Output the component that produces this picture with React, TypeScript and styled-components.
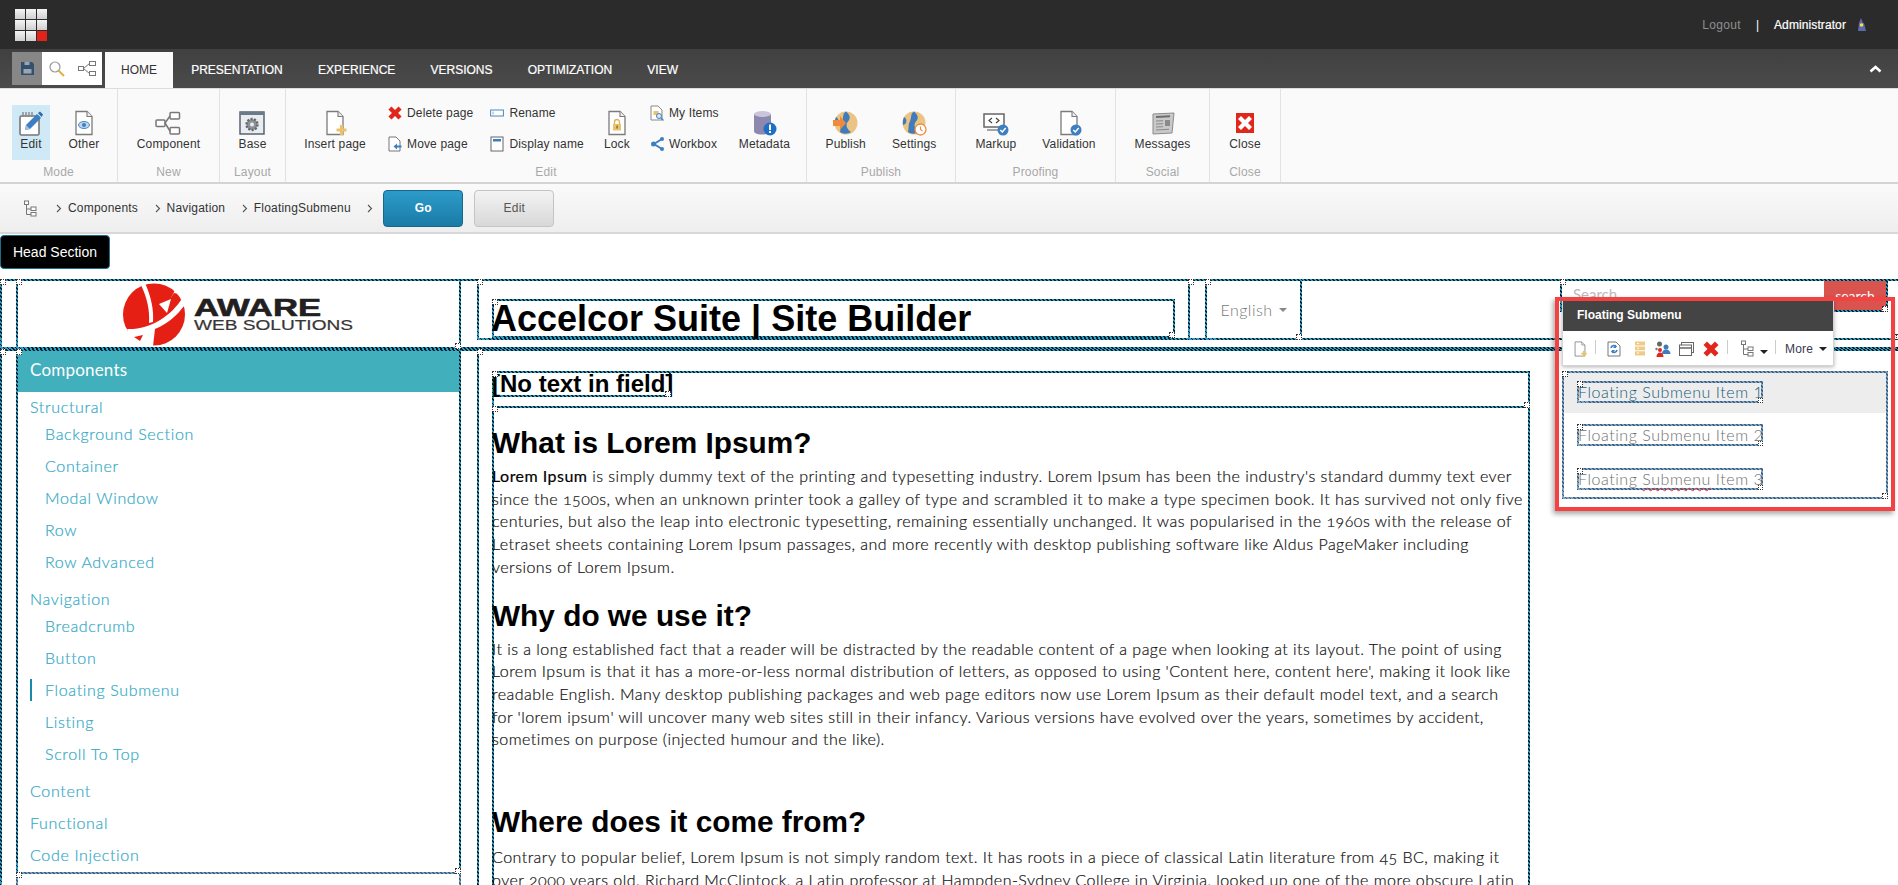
import React from "react";
import styled, { createGlobalStyle, css } from "styled-components";

const Global = createGlobalStyle`
  html, body { margin: 0; padding: 0; height: 885px; overflow: hidden; background: #fff; }
  body { font-family: "Liberation Sans", Arial, sans-serif; }
  * { box-sizing: border-box; }
`;

const dotted = css`
  border: 2px solid #13404f;
  border-image: repeating-linear-gradient(45deg, #0c1f27 0 1.41px, #2b9fc7 1.41px 2.83px) 2;
`;

const Frame = styled.div<{ $soft?: boolean }>`
  position: relative;
  ${dotted}
  ${(p) => p.$soft && css`
    border-image: repeating-linear-gradient(45deg, #3d5f80 0 1.41px, #7ea6c4 1.41px 2.83px) 2;
  `}
  &::before, &::after {
    content: "";
    position: absolute;
    width: 4px;
    height: 4px;
    background: #fff;
    border: 1px dotted #333;
    z-index: 2;
  }
  &::before { left: -2px; top: -2px; }
  &::after { right: -2px; bottom: -2px; }
`;

const Page = styled.div`
  position: relative;
  width: 1898px;
  height: 885px;
  overflow: hidden;
`;

const TopBar = styled.header`
  height: 49px;
  background: #2b2b2b;
  display: flex;
  align-items: center;
  padding: 0 0 0 15px;
  font-size: 12px;
`;

const AppGrid = styled.div`
  display: grid;
  grid-template-columns: repeat(3, 10px);
  grid-auto-rows: 10px;
  gap: 1px;
`;

const AppCell = styled.span<{ $red?: boolean }>`
  background: ${(p) => (p.$red ? "#e2231a" : "linear-gradient(#f4f4f4, #cfcfcf)")};
`;

const UserArea = styled.div`
  margin-left: auto;
  display: flex;
  align-items: center;
  padding-right: 32px;
`;

const Logout = styled.span`
  color: #8f8f8f;
  letter-spacing: 0.3px;
`;

const Pipe = styled.span`
  color: #fff;
  margin: 0 15px;
`;

const UserName = styled.span`
  color: #fff;
  letter-spacing: 0.1px;
  margin-right: 11px;
  -webkit-text-stroke: 0.2px #fff;
`;

const TabBar = styled.nav`
  height: 39px;
  background: linear-gradient(#404040, #4b4b4b);
  display: flex;
  align-items: flex-end;
  padding-left: 12px;
  position: relative;
`;

const Quick = styled.div`
  display: flex;
  height: 33px;
  margin-bottom: 3px;
  margin-right: 3px;
  background: #fff;
`;

const QuickBtn = styled.div<{ $active?: boolean }>`
  width: 30px;
  display: flex;
  align-items: center;
  justify-content: center;
  background: ${(p) => (p.$active ? "#878787" : "#fff")};
`;

const Tab = styled.div<{ $active?: boolean }>`
  height: 36px;
  padding: ${(p) => (p.$active ? "0 16px" : "0 18px 0 17.2px")};
  margin-right: ${(p) => (p.$active ? "1px" : "0")};
  display: flex;
  align-items: center;
  font-size: 12px;
  color: ${(p) => (p.$active ? "#333" : "#fff")};
  background: ${(p) => (p.$active ? "#fafafa" : "transparent")};
  -webkit-text-stroke: ${(p) => (p.$active ? "0" : "0.2px #fff")};
`;

const Collapse = styled.div`
  position: absolute;
  right: 16px;
  top: 16px;
  display: flex;
`;

const Ribbon = styled.section`
  height: 96px;
  background: #fafafa;
  border-top: 1px solid #ddd;
  border-bottom: 2px solid #d4d4d4;
  display: flex;
`;

const Group = styled.div<{ $w: number }>`
  width: ${(p) => p.$w}px;
  border-right: 1px solid #e2e2e2;
  display: flex;
  flex-direction: column;
  letter-spacing: 0.15px;
`;

const GroupBody = styled.div<{ $pad?: number; $gap?: number; $center?: boolean }>`
  flex: 1;
  display: flex;
  padding-left: ${(p) => p.$pad ?? 0}px;
  gap: ${(p) => p.$gap ?? 0}px;
  justify-content: ${(p) => (p.$center ? "center" : "flex-start")};
  padding-top: 16px;
`;

const GroupLabel = styled.div`
  height: 25px;
  line-height: 24px;
  text-align: center;
  color: #a8a8a8;
  font-size: 12px;
`;

const BigBtn = styled.div<{ $w?: number; $active?: boolean; $ml?: number }>`
  width: ${(p) => (p.$w ? `${p.$w}px` : "auto")};
  height: 55px;
  margin-left: ${(p) => p.$ml ?? 0}px;
  display: flex;
  flex-direction: column;
  align-items: center;
  font-size: 12px;
  color: #333;
  white-space: nowrap;
  background: ${(p) => (p.$active ? "#cfe9f6" : "transparent")};
  svg { height: 26px; width: 26px; margin: 5px 0 0; display: block; }
  span { margin-top: 1px; line-height: 15px; }
`;

const SmallCol = styled.div<{ $ml?: number }>`
  display: flex;
  flex-direction: column;
  margin-left: ${(p) => p.$ml ?? 0}px;
  gap: 15px;
`;

const SmallBtn = styled.div`
  display: flex;
  align-items: center;
  height: 16px;
  font-size: 12px;
  color: #333;
  white-space: nowrap;
  svg { width: 14px; height: 16px; margin-right: 5px; flex: none; }
`;

const Crumbs = styled.div`
  height: 50px;
  background: linear-gradient(#fafafa, #eeeeee);
  border-bottom: 2px solid #d8d8d8;
  display: flex;
  align-items: center;
  padding-left: 23px;
  font-size: 12px;
  letter-spacing: 0.2px;
  color: #333;
`;

const CrumbItem = styled.span`
  margin: 0 16.5px 0 6px;
  white-space: nowrap;
`;

const CrumbRoot = styled.span`
  display: flex;
  margin-right: 19px;
`;

const Go = styled.div`
  width: 80px;
  height: 37px;
  border-radius: 4px;
  border: 1px solid #15678c;
  background: linear-gradient(#2c9bca, #1b7ba6);
  color: #fff;
  font-weight: bold;
  display: flex;
  align-items: center;
  justify-content: center;
  margin-left: 10px;
`;

const EditBtn = styled(Go)`
  border-color: #c4c4c4;
  background: linear-gradient(#f3f3f3, #d8d8d8);
  color: #555;
  font-weight: normal;
  margin-left: 11px;
`;

const HeadSection = styled.div`
  width: 110px;
  height: 34px;
  margin: 1px 0 10px 0;
  background: #000;
  border: 1px solid #1a6e8c;
  border-radius: 4px;
  color: #fff;
  font-size: 14px;
  display: flex;
  align-items: center;
  justify-content: center;
`;

const HeaderRow = styled(Frame)`
  margin: 0 -6px 0 0;
  height: 70px;
  display: grid;
  grid-template-columns: 445px 1fr;
  column-gap: 16px;
  padding-left: 14px;
`;

const LogoCell = styled(Frame)`
  margin: -2px 0 -2px;
  display: flex;
  align-items: center;
  justify-content: center;
`;

const HeaderMain = styled(Frame)`
  margin-top: -2px;
  height: 61px;
  padding-left: 13px;
  display: flex;
`;

const TitleBox = styled(Frame)`
  width: 683px;
  height: 39px;
  margin-top: 18px;
  flex: none;
  display: flex;
  align-items: center;
`;

const Title = styled.h1`
  margin: 0 0 0 -3px;
  font-size: 36px;
  line-height: 38px;
  font-weight: bold;
  color: #000;
  white-space: nowrap;
`;

const LangOuter = styled(Frame)`
  margin: -2px 0 -2px 13px;
  flex: 1;
  padding-left: 15px;
  display: flex;
`;

const LangBox = styled(Frame)`
  width: 97px;
  margin: -2px 0;
  display: flex;
  align-items: center;
  justify-content: center;
  font-family: Lato, sans-serif;
  font-weight: 300;
  font-size: 16px;
  letter-spacing: 0.5px;
  color: #777;
  gap: 6px;
`;

const Caret = styled.i<{ $c?: string; $low?: boolean }>`
  width: 0;
  height: 0;
  border-left: 4px solid transparent;
  border-right: 4px solid transparent;
  border-top: 4px solid ${(p) => p.$c ?? "#888"};
  display: inline-block;
  margin-top: ${(p) => (p.$low ? "7px" : "0")};
`;

const SearchBox = styled(Frame)`
  width: 328px;
  height: 33px;
  margin: -2px 0 0 258px;
  display: flex;
  justify-content: space-between;
`;

const SearchHint = styled.span`
  font-family: Lato, sans-serif;
  font-size: 15px;
  color: #bbb;
  padding: 4px 0 0 11px;
`;

const SearchBtn = styled.div`
  width: 62px;
  background: #d9534f;
  color: #fff;
  font-family: Lato, sans-serif;
  font-size: 14px;
  display: flex;
  align-items: center;
  justify-content: center;
`;

const MainRow = styled(Frame)`
  margin: 0 -6px 0 0;
  height: 540px;
  display: grid;
  grid-template-columns: 445px 1fr;
  column-gap: 16px;
  padding-left: 14px;
`;

const SideCol = styled.div`
  display: flex;
  flex-direction: column;
  margin-top: -2px;
`;

const Sidebar = styled(Frame)`
  height: 525px;
  font-family: Lato, sans-serif;
  font-weight: 300;
  color: #33a9c6;
  -webkit-text-stroke: 0.2px #33a9c6;
  font-size: 16px;
  letter-spacing: 0.66px;
`;

const SideBelow = styled(Frame)`
  flex: 1;
  margin-top: -2px;
`;

const SideHead = styled.div`
  height: 41px;
  background: #41afbc;
  color: #fff;
  -webkit-text-stroke: 0;
  font-size: 17px;
  font-weight: 400;
  line-height: 38px;
  padding-left: 12px;
  letter-spacing: 0.2px;
`;

const SideSection = styled.div<{ $mt?: number; $tight?: boolean }>`
  margin-top: ${(p) => p.$mt ?? 0}px;
  padding-left: 12px;
  height: ${(p) => (p.$tight ? 22 : 32)}px;
  line-height: ${(p) => (p.$tight ? 22 : 32)}px;
`;

const SideItem = styled.div<{ $active?: boolean }>`
  position: relative;
  height: 32px;
  line-height: 32px;
  padding-left: 27px;
  ${(p) => p.$active && css`
    &::before {
      content: "";
      position: absolute;
      left: 12px;
      top: 5px;
      bottom: 5px;
      width: 2px;
      background: #1a8aaa;
    }
  `}
`;

const MainCol = styled(Frame)`
  margin-top: -2px;
  height: 560px;
  padding: 20px 0 0 13px;
  display: flex;
  align-items: flex-start;
`;

const ContentCol = styled.div`
  width: 1038px;
  flex: none;
`;

const FieldBox = styled(Frame)`
  height: 37px;
`;

const NoText = styled(Frame)`
  width: 179px;
  height: 26px;
  margin: -2px 0 0 -2px;
  font-size: 24px;
  line-height: 24px;
  font-weight: bold;
  color: #000;
  white-space: nowrap;
  display: flex;
  align-items: center;
  span { margin-left: -2px; }
`;

const Body = styled(Frame)`
  height: 500px;
  margin-top: -2px;
  padding-top: 18px;
`;

const H2 = styled.h2<{ $mt?: number; $mb?: number }>`
  margin: ${(p) => p.$mt ?? 0}px 0 ${(p) => p.$mb ?? 6}px -2px;
  font-size: 29.8px;
  line-height: 33px;
  font-weight: bold;
  color: #000;
`;

const Para = styled.p`
  margin: 0 0 0 -2px;
  font-family: Lato, sans-serif;
  font-weight: 300;
  font-size: 16px;
  line-height: 22.7px;
  letter-spacing: 0.47px;
  color: #111;
  -webkit-text-stroke: 0.2px #111;
  white-space: nowrap;
  font-variant-numeric: oldstyle-nums;
  strong { font-weight: 400; color: #000; }
`;

const SubMenu = styled(Frame)`
  width: 326px;
  height: 128px;
  margin-left: 32px;
  flex: none;
  font-family: Lato, sans-serif;
  font-weight: 300;
  font-size: 16px;
  letter-spacing: 0.55px;
`;

const SubItem = styled.div<{ $active?: boolean }>`
  height: ${(p) => (p.$active ? 40 : 44)}px;
  background: ${(p) => (p.$active ? "#ededed" : "transparent")};
  color: ${(p) => (p.$active ? "#17597a" : "#6f6f6f")};
  display: flex;
  align-items: ${(p) => (p.$active ? "flex-start" : "center")};
  padding: ${(p) => (p.$active ? "8px 0 0 13px" : "0 0 0 13px")};
`;

const SubText = styled(Frame)`
  height: 22px;
  line-height: 18px;
  white-space: nowrap;
  width: 186px;
  text-indent: -1px;
  &::after { width: 3px; height: 3px; right: -2px; bottom: -2px; }
  u { text-decoration: underline wavy #e33 1px; text-underline-offset: 2px; }
`;

const Highlight = styled.div`
  position: absolute;
  left: 1555px;
  top: 297px;
  width: 340px;
  height: 214px;
  border: 4px solid #f44242;
  box-shadow: -2px 3px 5px rgba(0, 0, 0, 0.35);
  z-index: 6;
`;

const Floating = styled.div`
  position: absolute;
  left: 1562px;
  top: 299px;
  width: 272px;
  height: 67px;
  background: #fff;
  border: 1px solid #d5d5d5;
  box-shadow: 0 1px 4px rgba(0, 0, 0, 0.3);
  z-index: 5;
`;

const FloatTitle = styled.div`
  height: 31px;
  background: #444;
  color: #fff;
  font-size: 12px;
  font-weight: bold;
  line-height: 31px;
  padding-left: 14px;
`;

const FloatTools = styled.div`
  height: 34px;
  display: flex;
  align-items: center;
  padding: 1px 0 0 9px;
  font-size: 12px;
  letter-spacing: 0.2px;
  color: #3a3a55;
  svg { flex: none; }
`;

const ToolGap = styled.span<{ $w: number }>`
  width: ${(p) => p.$w}px;
  flex: none;
`;

const FloatSep = styled.span<{ $l: number; $r: number }>`
  width: 1px;
  height: 14px;
  background: #ccc;
  margin: -4px ${(p) => p.$r}px 0 ${(p) => p.$l}px;
`;

const Ico = styled.svg`
  display: block;
`;

/* ---------- icons ---------- */
const Doc = ({ s = "#7b7b7b" }: { s?: string }) => (
  <>
    <path d="M5 1.5h11l5 5v18H5z" fill="#fff" stroke={s} strokeWidth="1.3" />
    <path d="M16 1.5v5h5" fill="#eee" stroke={s} strokeWidth="1.1" />
  </>
);
const Check = () => (
  <>
    <circle cx="20" cy="20" r="5.5" fill="#3d7fc1" />
    <path d="M17.3 20l2 2 3.4-4" fill="none" stroke="#fff" strokeWidth="1.5" />
  </>
);
const EditIcon = () => (
  <svg viewBox="0 0 26 26">
    <rect x="2" y="6" width="19" height="19" rx="1.5" fill="#fff" stroke="#777" strokeWidth="1.6" />
    <path d="M5 2v5M8 2v5M11 2v5M14 2v5" stroke="#888" strokeWidth="1.4" />
    <path d="M7 20l1-5L19 4l4 4-11 11z" fill="#3d7fc1" />
    <path d="M20 3l2-1.5 3 3L23.5 7z" fill="#2f6aa6" />
    <path d="M7 20l1-5 4 4z" fill="#9fc3e6" />
  </svg>
);
const OtherIcon = () => (
  <svg viewBox="0 0 26 26">
    <Doc />
    <ellipse cx="13" cy="15" rx="5.5" ry="3.5" fill="#bcd6ee" stroke="#4d87bd" />
    <circle cx="13" cy="15" r="2" fill="#3d7fc1" />
  </svg>
);
const ComponentIcon = () => (
  <svg viewBox="0 0 26 26" fill="#fff" stroke="#777" strokeWidth="1.5">
    <rect x="1" y="10" width="9" height="6.5" rx="1" />
    <rect x="15" y="2.5" width="9.5" height="6.5" rx="1" />
    <rect x="15" y="17.5" width="9.5" height="6.5" rx="1" />
    <path d="M10 13l5-7M10 13l5 8" fill="none" />
  </svg>
);
const BaseIcon = () => (
  <svg viewBox="0 0 26 26">
    <rect x="1" y="2" width="24" height="22" fill="#e9edf1" stroke="#4d5a66" strokeWidth="1.4" />
    <rect x="1" y="2" width="24" height="3" fill="#6b7a88" />
    <circle cx="13" cy="14.5" r="5.5" fill="#8d9296" stroke="#666" strokeWidth="2.4" strokeDasharray="2 1.4" />
    <circle cx="13" cy="14.5" r="2" fill="#e9edf1" />
  </svg>
);
const InsertIcon = () => (
  <svg viewBox="0 0 26 26">
    <Doc />
    <path d="M19.5 15v10M14.5 20h10" stroke="#eac26c" strokeWidth="3.2" />
  </svg>
);
const LockIcon = () => (
  <svg viewBox="0 0 26 26">
    <Doc />
    <path d="M10.5 14v-2a2.5 2.5 0 0 1 5 0v2" fill="none" stroke="#d9b25c" strokeWidth="1.3" />
    <rect x="9" y="14" width="8" height="6.5" fill="#eac26c" />
    <rect x="12.4" y="15.5" width="1.4" height="3" fill="#8a6d2b" />
  </svg>
);
const RedX = () => (
  <Ico width="16" height="16" viewBox="0 0 16 16">
    <path d="M0.5 4L4 0.5l4 4 4-4L15.5 4l-4 4 4 4-3.5 3.5-4-4-4 4L0.5 12l4-4z" fill="#e1261c" />
  </Ico>
);
const RenameIcon = () => (
  <svg viewBox="0 0 14 16">
    <rect x="0.6" y="5" width="12.8" height="6" fill="#fff" stroke="#4d87bd" />
    <rect x="2" y="6.5" width="2" height="3" fill="#bcd6ee" />
  </svg>
);
const MoveIcon = () => (
  <svg viewBox="0 0 14 16">
    <path d="M1 1h7l4 4v10H1z" fill="#fff" stroke="#777" />
    <path d="M13.5 9.5H9V7.5L5.5 10.5 9 13.5v-2h4.5z" fill="#3d7fc1" />
  </svg>
);
const DisplayIcon = () => (
  <svg viewBox="0 0 14 16">
    <rect x="1" y="1" width="12" height="14" fill="#fff" stroke="#666" />
    <rect x="3" y="3" width="8" height="2.5" fill="#3d7fc1" />
  </svg>
);
const MyItemsIcon = () => (
  <svg viewBox="0 0 14 16">
    <path d="M1 1h7l4 4v10H1z" fill="#fff" stroke="#888" />
    <rect x="3.5" y="6" width="5" height="4" fill="#eac26c" />
    <circle cx="9" cy="11" r="2.5" fill="#dbe9f6" stroke="#3d7fc1" />
    <path d="M11 13l2.5 2.5" stroke="#3d7fc1" strokeWidth="1.3" />
  </svg>
);
const WorkboxIcon = () => (
  <svg viewBox="0 0 14 16">
    <path d="M12 3L4 8l8 5" fill="none" stroke="#3d7fc1" strokeWidth="2" />
    <circle cx="3.5" cy="8" r="2.5" fill="#3d7fc1" />
    <circle cx="12" cy="3" r="2" fill="#3d7fc1" />
    <circle cx="12" cy="13" r="2" fill="#3d7fc1" />
  </svg>
);
const MetadataIcon = () => (
  <svg viewBox="0 0 26 26">
    <path d="M3 4v17c0 2 3 3.5 8 3.5s9-1.5 9-3.5V4z" fill="#8d88ad" />
    <ellipse cx="11.5" cy="4" rx="8.5" ry="3" fill="#c9c6dc" />
    <circle cx="19" cy="19" r="6.5" fill="#1f6fc4" />
    <rect x="18" y="14.5" width="2" height="5.5" fill="#fff" />
    <rect x="18" y="21" width="2" height="2" fill="#fff" />
  </svg>
);
const Globe = () => (
  <>
    <circle cx="13" cy="13" r="11.5" fill="#ecc382" />
    <path d="M13 1.5c4 3 5 7 2 10s-1 8 3 10.5c-3 2-8 2.5-11 0 1-4 0-7 2-11S9 4 13 1.5z" fill="#3f7cbd" />
    <path d="M3 7c2 1 3 3 2 6-1 1-2 2-3 2-.5-3 0-6 1-8z" fill="#3f7cbd" />
  </>
);
const PublishIcon = () => (
  <svg viewBox="0 0 26 26">
    <Globe />
    <path d="M0 10h7V6l6 7-6 7v-4H0z" fill="#ee8a3c" />
  </svg>
);
const SettingsIcon = () => (
  <svg viewBox="0 0 26 26">
    <Globe />
    <circle cx="19.5" cy="19.5" r="5.5" fill="#fff" stroke="#ee8a3c" strokeWidth="1.3" />
    <path d="M19.5 16.5v3l2 1.5" fill="none" stroke="#ee8a3c" strokeWidth="1.1" />
  </svg>
);
const MarkupIcon = () => (
  <svg viewBox="0 0 26 26">
    <rect x="1" y="4" width="20" height="13" fill="#fff" stroke="#666" strokeWidth="1.5" />
    <path d="M4 20h15" stroke="#888" strokeWidth="1.5" />
    <path d="M9 8l-3 2.5 3 2.5M13 8l3 2.5-3 2.5" fill="none" stroke="#444" strokeWidth="1.2" />
    <Check />
  </svg>
);
const ValidationIcon = () => (
  <svg viewBox="0 0 26 26">
    <Doc />
    <Check />
  </svg>
);
const MessagesIcon = () => (
  <svg viewBox="0 0 26 26">
    <path d="M3 4l21-1-2 20-19 1z" fill="#c9c9c9" stroke="#8a8a8a" />
    <path d="M6 7l14-.8" stroke="#6d6d6d" strokeWidth="2" />
    <path d="M6 11l7-.3M6 14l7-.3M6 17l7-.3M6 20l13-.7" stroke="#8a8a8a" />
    <rect x="15" y="10" width="5" height="6" fill="#8a8a8a" />
  </svg>
);
const CloseIcon = () => (
  <svg viewBox="0 0 26 26">
    <rect x="4" y="3" width="18" height="20" fill="#e1261c" />
    <path d="M9 6l4 4 4-4 3 3-4 4 4 4-3 3-4-4-4 4-3-3 4-4-4-4z" fill="#fff" />
  </svg>
);
const TreeIcon = () => (
  <Ico width="14" height="17" viewBox="0 0 14 17" fill="#fff" stroke="#777">
    <rect x="1.5" y="1" width="4" height="3.5" />
    <rect x="8" y="7" width="5" height="3.5" />
    <rect x="8" y="12.5" width="5" height="3.5" />
    <path d="M3.5 4.5V14.5H8M3.5 9H8" fill="none" />
  </Ico>
);
const SaveIcon = () => (
  <Ico width="15" height="15" viewBox="0 0 15 15">
    <path d="M1 1h11l2 2v11H1z" fill="#34506e" />
    <rect x="4.5" y="1" width="5" height="3" fill="#9aa5b0" />
    <rect x="3.5" y="8" width="8" height="4.5" fill="#9aa5b0" />
  </Ico>
);
const SearchIcon = () => (
  <Ico width="18" height="18" viewBox="0 0 18 18">
    <circle cx="7" cy="7" r="5" fill="#fff" stroke="#999" strokeWidth="1.2" />
    <path d="M10.5 10.5L16 16" stroke="#e4ae45" strokeWidth="2" />
  </Ico>
);
const ShareBoxes = () => (
  <Ico width="18" height="16" viewBox="0 0 18 16" fill="#fff" stroke="#777">
    <rect x="0.5" y="5.5" width="5" height="4" />
    <rect x="11.5" y="0.5" width="6" height="4" />
    <rect x="11.5" y="10.5" width="6" height="4" />
    <path d="M5.5 7.5l6-5M5.5 7.5l6 5" fill="none" />
  </Ico>
);
const UserIcon = () => (
  <Ico width="9" height="14" viewBox="0 0 9 14">
    <path d="M4 0l2 5H2z" fill="#6c62a8" />
    <path d="M1 13l1-8h5l2 8z" fill="#5b6aa8" />
    <circle cx="4.5" cy="7" r="1.8" fill="#f2e04a" />
  </Ico>
);
const ChevronUp = () => (
  <Ico width="13" height="8" viewBox="0 0 13 8">
    <path d="M1.5 6.5l5-4.5 5 4.5" fill="none" stroke="#fff" strokeWidth="2.6" />
  </Ico>
);
const FDoc = () => (
  <Ico width="16" height="16" viewBox="0 0 26 26">
    <Doc />
    <path d="M19.5 16v9M15 20.5h9" stroke="#eac26c" strokeWidth="3.2" />
  </Ico>
);
const FRefresh = () => (
  <Ico width="14" height="16" viewBox="0 0 14 16">
    <path d="M1 1h8l4 4v10H1z" fill="#fff" stroke="#777" />
    <path d="M4 7a3 3 0 0 1 5.5-1M10 9a3 3 0 0 1-5.5 1" fill="none" stroke="#3d7fc1" strokeWidth="1.6" />
    <path d="M9 3.5V7H6M5 12.5V9h3" fill="#3d7fc1" />
  </Ico>
);
const FStack = () => (
  <Ico width="12" height="15" viewBox="0 0 12 15">
    <rect x="1" y="0.5" width="10" height="14" fill="#efcb87" />
    <path d="M1 5h10M1 9.8h10" stroke="#fff" strokeWidth="1.1" />
    <path d="M3 2.5h2M3 7.3h2M3 12h2" stroke="#fff" />
  </Ico>
);
const FPeople = () => (
  <Ico width="16" height="16" viewBox="0 0 16 16">
    <circle cx="4.5" cy="3" r="2.5" fill="#666" />
    <circle cx="11" cy="6" r="2.5" fill="#3f7cbd" />
    <path d="M7 13c0-3 1.5-4.5 4-4.5s4.5 1.5 4.5 4.5z" fill="#3f7cbd" />
    <circle cx="5" cy="9" r="2" fill="#e1261c" />
    <path d="M1.5 16c0-3 1.5-4.5 3.5-4.5S8.5 13 8.5 16z" fill="#e1261c" />
    <circle cx="1.5" cy="8" r="1.2" fill="#777" />
  </Ico>
);
const FWindows = () => (
  <Ico width="15" height="14" viewBox="0 0 15 14" fill="#fff" stroke="#666">
    <rect x="2.5" y="0.5" width="12" height="10" />
    <rect x="0.5" y="3" width="12" height="10.5" />
    <path d="M0.5 6h12" strokeWidth="1.5" />
  </Ico>
);
const Logo = () => (
  <svg width="232" height="63" viewBox="0 0 232 63">
    <circle cx="31" cy="31.5" r="31" fill="#e61f14" />
    <path d="M18 2C24 15 27 27 26 40l4-1C31 27 28 13 22 0z" fill="#fff" />
    <path d="M36 21l12-5-4 14z" fill="#fff" />
    <path d="M47 16l4-6 11 2-2-6-6-3-4 8z" fill="#fff" />
    <path d="M4 46c22 1 44-12 56-32l3 6C50 40 28 52 6 50z" fill="#fff" />
    <path d="M2 48l30-2-2 17H-1z" fill="#fff" />
    <path d="M11 54l9-2-3 6z" fill="#e61f14" />
    <text x="71" y="33" fontFamily="Liberation Sans" fontWeight="bold" fontSize="24" fill="#231f20" textLength="127" lengthAdjust="spacingAndGlyphs" stroke="#231f20" strokeWidth="0.6">AWARE</text>
    <text x="71" y="47" fontFamily="Liberation Sans" fontSize="14" fill="#3a3637" textLength="159" lengthAdjust="spacingAndGlyphs" stroke="#3a3637" strokeWidth="0.2">WEB SOLUTIONS</text>
  </svg>
);
const Chevron = () => (
  <Ico width="6" height="9" viewBox="0 0 6 9">
    <path d="M1 1l3.5 3.5L1 8" fill="none" stroke="#555" strokeWidth="1.1" />
  </Ico>
);

export default function App() {
  return (
    <Page>
      <Global />
      <TopBar>
        <AppGrid>
          {Array.from({ length: 9 }).map((_, i) => (
            <AppCell key={i} $red={i === 8} />
          ))}
        </AppGrid>
        <UserArea>
          <Logout>Logout</Logout>
          <Pipe>|</Pipe>
          <UserName>Administrator</UserName>
          <UserIcon />
        </UserArea>
      </TopBar>
      <TabBar>
        <Quick>
          <QuickBtn $active><SaveIcon /></QuickBtn>
          <QuickBtn><SearchIcon /></QuickBtn>
          <QuickBtn><ShareBoxes /></QuickBtn>
        </Quick>
        <Tab $active>HOME</Tab>
        <Tab>PRESENTATION</Tab>
        <Tab>EXPERIENCE</Tab>
        <Tab>VERSIONS</Tab>
        <Tab>OPTIMIZATION</Tab>
        <Tab>VIEW</Tab>
        <Collapse><ChevronUp /></Collapse>
      </TabBar>
      <Ribbon>
        <Group $w={118}>
          <GroupBody $pad={12}>
            <BigBtn $w={38} $active><EditIcon /><span>Edit</span></BigBtn>
            <BigBtn $w={48} $ml={10}><OtherIcon /><span>Other</span></BigBtn>
          </GroupBody>
          <GroupLabel>Mode</GroupLabel>
        </Group>
        <Group $w={102}>
          <GroupBody $center><BigBtn><ComponentIcon /><span>Component</span></BigBtn></GroupBody>
          <GroupLabel>New</GroupLabel>
        </Group>
        <Group $w={66}>
          <GroupBody $center><BigBtn><BaseIcon /><span>Base</span></BigBtn></GroupBody>
          <GroupLabel>Layout</GroupLabel>
        </Group>
        <Group $w={521}>
          <GroupBody $pad={19}>
            <BigBtn $w={60}><InsertIcon /><span>Insert page</span></BigBtn>
            <SmallCol $ml={23}>
              <SmallBtn><RedX />Delete page</SmallBtn>
              <SmallBtn><MoveIcon />Move page</SmallBtn>
            </SmallCol>
            <SmallCol $ml={17}>
              <SmallBtn><RenameIcon />Rename</SmallBtn>
              <SmallBtn><DisplayIcon />Display name</SmallBtn>
            </SmallCol>
            <BigBtn $ml={20}><LockIcon /><span>Lock</span></BigBtn>
            <SmallCol $ml={20}>
              <SmallBtn><MyItemsIcon />My Items</SmallBtn>
              <SmallBtn><WorkboxIcon />Workbox</SmallBtn>
            </SmallCol>
            <BigBtn $ml={20}><MetadataIcon /><span>Metadata</span></BigBtn>
          </GroupBody>
          <GroupLabel>Edit</GroupLabel>
        </Group>
        <Group $w={149}>
          <GroupBody $center $gap={26}>
            <BigBtn><PublishIcon /><span>Publish</span></BigBtn>
            <BigBtn><SettingsIcon /><span>Settings</span></BigBtn>
          </GroupBody>
          <GroupLabel>Publish</GroupLabel>
        </Group>
        <Group $w={160}>
          <GroupBody $center $gap={26}>
            <BigBtn><MarkupIcon /><span>Markup</span></BigBtn>
            <BigBtn><ValidationIcon /><span>Validation</span></BigBtn>
          </GroupBody>
          <GroupLabel>Proofing</GroupLabel>
        </Group>
        <Group $w={94}>
          <GroupBody $center><BigBtn><MessagesIcon /><span>Messages</span></BigBtn></GroupBody>
          <GroupLabel>Social</GroupLabel>
        </Group>
        <Group $w={71}>
          <GroupBody $center><BigBtn><CloseIcon /><span>Close</span></BigBtn></GroupBody>
          <GroupLabel>Close</GroupLabel>
        </Group>
      </Ribbon>
      <Crumbs>
        <CrumbRoot><TreeIcon /></CrumbRoot>
        <Chevron />
        <CrumbItem>Components</CrumbItem>
        <Chevron />
        <CrumbItem>Navigation</CrumbItem>
        <Chevron />
        <CrumbItem>FloatingSubmenu</CrumbItem>
        <Chevron />
        <Go>Go</Go>
        <EditBtn>Edit</EditBtn>
      </Crumbs>
      <HeadSection>Head Section</HeadSection>
      <HeaderRow>
        <LogoCell><Logo /></LogoCell>
        <HeaderMain>
          <TitleBox><Title>Accelcor Suite | Site Builder</Title></TitleBox>
          <LangOuter>
            <LangBox>English <Caret /></LangBox>
            <SearchBox>
              <SearchHint>Search...</SearchHint>
              <SearchBtn>search</SearchBtn>
            </SearchBox>
          </LangOuter>
        </HeaderMain>
      </HeaderRow>
      <MainRow>
        <SideCol>
          <Sidebar>
            <SideHead>Components</SideHead>
            <SideSection $tight $mt={4}>Structural</SideSection>
            <SideItem>Background Section</SideItem>
            <SideItem>Container</SideItem>
            <SideItem>Modal Window</SideItem>
            <SideItem>Row</SideItem>
            <SideItem>Row Advanced</SideItem>
            <SideSection $tight $mt={10}>Navigation</SideSection>
            <SideItem>Breadcrumb</SideItem>
            <SideItem>Button</SideItem>
            <SideItem $active>Floating Submenu</SideItem>
            <SideItem>Listing</SideItem>
            <SideItem>Scroll To Top</SideItem>
            <SideSection $mt={5}>Content</SideSection>
            <SideSection>Functional</SideSection>
            <SideSection>Code Injection</SideSection>
          </Sidebar>
          <SideBelow $soft />
        </SideCol>
        <MainCol>
          <ContentCol>
            <FieldBox>
              <NoText><span>[No text in field]</span></NoText>
            </FieldBox>
            <Body>
              <H2>What is Lorem Ipsum?</H2>
              <Para>
                <strong>Lorem Ipsum</strong> is simply dummy text of the printing and typesetting industry. Lorem Ipsum has been the industry's standard dummy text ever<br />
                since the 1500s, when an unknown printer took a galley of type and scrambled it to make a type specimen book. It has survived not only five<br />
                centuries, but also the leap into electronic typesetting, remaining essentially unchanged. It was popularised in the 1960s with the release of<br />
                Letraset sheets containing Lorem Ipsum passages, and more recently with desktop publishing software like Aldus PageMaker including<br />
                versions of Lorem Ipsum.
              </Para>
              <H2 $mt={20}>Why do we use it?</H2>
              <Para>
                It is a long established fact that a reader will be distracted by the readable content of a page when looking at its layout. The point of using<br />
                Lorem Ipsum is that it has a more-or-less normal distribution of letters, as opposed to using 'Content here, content here', making it look like<br />
                readable English. Many desktop publishing packages and web page editors now use Lorem Ipsum as their default model text, and a search<br />
                for 'lorem ipsum' will uncover many web sites still in their infancy. Various versions have evolved over the years, sometimes by accident,<br />
                sometimes on purpose (injected humour and the like).
              </Para>
              <H2 $mt={54} $mb={8}>Where does it come from?</H2>
              <Para>
                Contrary to popular belief, Lorem Ipsum is not simply random text. It has roots in a piece of classical Latin literature from 45 BC, making it<br />
                over 2000 years old. Richard McClintock, a Latin professor at Hampden-Sydney College in Virginia, looked up one of the more obscure Latin
              </Para>
            </Body>
          </ContentCol>
          <SubMenu $soft>
            <SubItem $active><SubText $soft>Floating Submenu Item 1</SubText></SubItem>
            <SubItem><SubText $soft>Floating Submenu Item 2</SubText></SubItem>
            <SubItem><SubText $soft>Floating <u>Submenu</u> Item 3</SubText></SubItem>
          </SubMenu>
        </MainCol>
      </MainRow>
      <Floating>
        <FloatTitle>Floating Submenu</FloatTitle>
        <FloatTools>
          <FDoc />
          <FloatSep $l={7} $r={11} />
          <FRefresh />
          <ToolGap $w={13} />
          <FStack />
          <ToolGap $w={9} />
          <FPeople />
          <ToolGap $w={8} />
          <FWindows />
          <ToolGap $w={9} />
          <RedX />
          <FloatSep $l={8} $r={12} />
          <TreeIcon />
          <ToolGap $w={6} />
          <Caret $c="#222" $low />
          <FloatSep $l={7} $r={9} />
          More
          <ToolGap $w={6} />
          <Caret $c="#222" />
        </FloatTools>
      </Floating>
      <Highlight />
    </Page>
  );
}
